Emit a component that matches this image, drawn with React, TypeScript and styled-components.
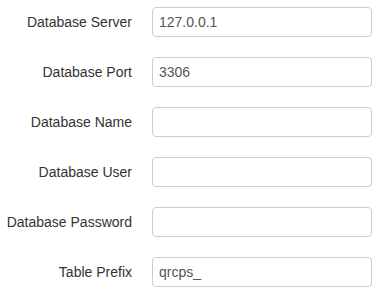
import React from 'react';
import styled, { createGlobalStyle } from 'styled-components';

const GlobalStyle = createGlobalStyle`
  body {
    margin: 0;
    background: #fff;
    font-family: "Liberation Sans", Arial, sans-serif;
    font-size: 14px;
    color: #333;
  }
`

const Form = styled.form`
  width: 379px;
  padding-top: 7px;
  display: flex;
  flex-direction: column;
  row-gap: 20px;
`
const Row = styled.div`
  display: grid;
  grid-template-columns: 132px 220px;
  column-gap: 20px;
  align-items: center;
  height: 30px;
`
const Label = styled.label`
  text-align: right;
  font-size: 14px;
  color: #333;
  white-space: nowrap;
`
const Input = styled.input`
  box-sizing: border-box;
  width: 220px;
  height: 30px;
  padding: 0 6px;
  border: 1px solid #ccc;
  border-radius: 4px;
  font-family: "Liberation Sans", Arial, sans-serif;
  font-size: 14px;
  color: #555;
  background: #fff;
  outline: none;
`

const fields = [
  { id: 'server', label: 'Database Server', value: '127.0.0.1' },
  { id: 'port', label: 'Database Port', value: '3306' },
  { id: 'name', label: 'Database Name', value: '' },
  { id: 'user', label: 'Database User', value: '' },
  { id: 'password', label: 'Database Password', value: '' },
  { id: 'prefix', label: 'Table Prefix', value: 'qrcps_' },
];

function App() {
  return (
    <>
      <GlobalStyle />
      <Form onSubmit={(e) => e.preventDefault()}>
        {fields.map((f) => (
          <Row key={f.id}>
            <Label htmlFor={f.id}>{f.label}</Label>
            <Input
              id={f.id}
              type={f.id === 'password' ? 'password' : 'text'}
              defaultValue={f.value}
            />
          </Row>
        ))}
      </Form>
    </>
  );
}

export default App;
